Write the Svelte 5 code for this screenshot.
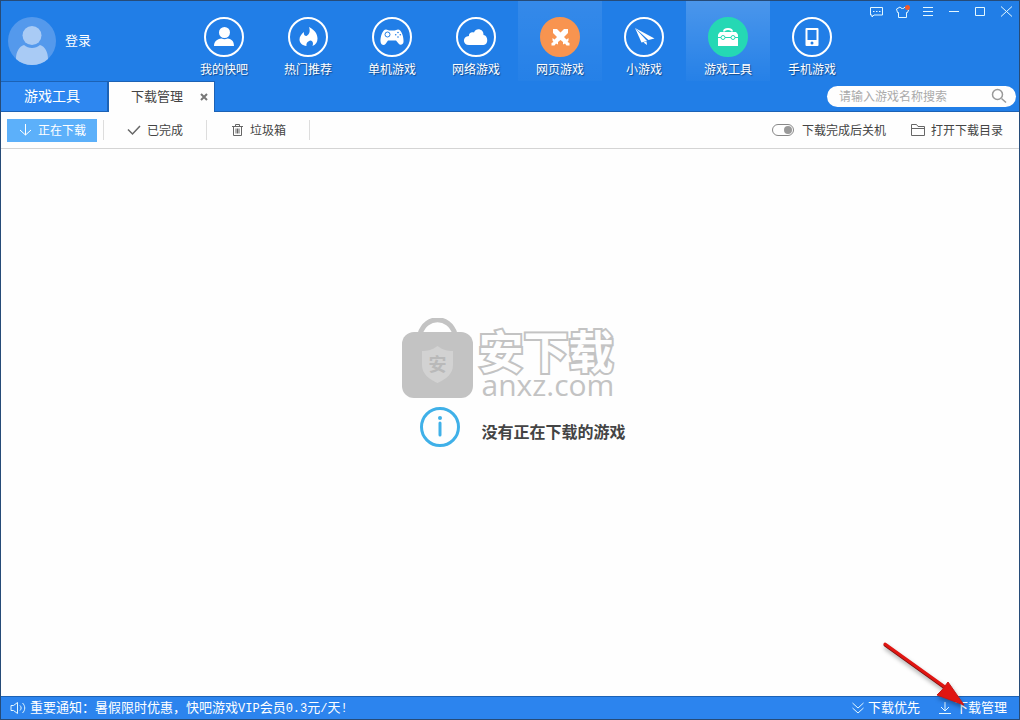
<script>
  const nav = [
    { id: 'mine', label: '我的快吧' },
    { id: 'hot', label: '热门推荐' },
    { id: 'single', label: '单机游戏' },
    { id: 'online', label: '网络游戏' },
    { id: 'web', label: '网页游戏', fill: 'orange' },
    { id: 'mini', label: '小游戏' },
    { id: 'tools', label: '游戏工具', fill: 'green' },
    { id: 'mobile', label: '手机游戏' },
  ];
  const controls = [
    { id: 'feedback', label: '反馈' },
    { id: 'skin', label: '换肤' },
    { id: 'menu', label: '菜单' },
    { id: 'min', label: '最小化' },
    { id: 'max', label: '最大化' },
    { id: 'close', label: '关闭' },
  ];
  const filters = [
    { id: 'active', label: '正在下载' },
    { id: 'done', label: '已完成' },
    { id: 'trash', label: '垃圾箱' },
  ];
  let filter = $state('active');
  let keyword = $state('');
  let shutdown = $state(true);
</script>

<div class="window">
  <header>
    <div class="top">
      <button class="user">
        <svg class="avatar" viewBox="0 0 48 48" aria-hidden="true">
          <circle cx="24" cy="24" r="24" fill="#5499ec" />
          <circle cx="24" cy="18.500" r="9.500" fill="#a9cbf5" />
          <path d="M8 42c0-7 3-12.500 8-14 4.500 4 11.500 4 16 0 5 1.500 8 7 8 14-4.500 4-10 6-16 6S12.500 46 8 42z" fill="#a9cbf5" />
        </svg>
        <span>登录</span>
      </button>

      <nav>
        {#each nav as item}
          <a href="#{item.id}" class="nav-item {item.fill ?? ''}">
            <svg class="nav-icon" viewBox="0 0 40 40" aria-hidden="true">
              <circle class="ring" cx="20" cy="20" r="19" />
              {#if item.id === 'mine'}
                <circle cx="20.500" cy="15.500" r="5.500" />
                <path d="M10 29c0-4.500 3-7 7.500-7.500 2 1 4 1 6 0C28 22 30 24.500 30 29z" />
              {:else if item.id === 'hot'}
                <path d="M21 10c5 2.500 8.500 6.500 8.500 11.500 0 3.500-1.500 6-5 7.500 1-2.500.5-5-2-5.500-2.500.5-4.500 2.500-4 5.500-4-.5-7-3-7-6.500 0-3 2-5.500 4.500-7.500-.5 2.500.5 4 2.500 4 3-1.500 4-5 2.500-9z" />
              {:else if item.id === 'single'}
                <path d="M14 12.500c1.500 0 2 1 3.500 1h5c1.500 0 2-1 3.500-1 3.500 0 6 8 5.500 12.500-.4 3-3.500 3.500-5 1.500L24 23.500h-8L13.500 27c-1.500 1.800-4.600 1-4.900-2C8 20.500 10.500 12.500 14 12.500z" />
                <circle class="cut" cx="15.500" cy="17.500" r="2.500" />
                <g class="dot"><circle cx="26" cy="15.500" r=".8" /><circle cx="26" cy="20" r=".8" /><circle cx="23.700" cy="17.700" r=".8" /><circle cx="28.300" cy="17.700" r=".8" /></g>
              {:else if item.id === 'online'}
                <path d="M13 28c-6.500 0-7-8.500 0-9-.5-3 3-4.500 5-3.500 2-5.500 10-3.500 9.500 2.500 5 .5 5 10 0 10z" />
              {:else if item.id === 'web'}
                <path d="M13 12h4l3.500 3.500L24 12h4v4l-4 4 2.500 2.500 2-1.500v2.500l-1 1.500 2 1v2.500h-3l-1.500-2-2 1v-2.500L20.500 23l-2.500 2v2.500l-2-1-1.500 2h-3V26l2-1-1-1.500V21l2 1.500L17 20l-4-4z" />
              {:else if item.id === 'mini'}
                <path d="M11 11l19.500 10.500-6 1.500z" />
                <path d="M11 11l12 13-5.500 1.500z" />
                <path d="M19.500 25.500l3-1 .5 3.500z" />
              {:else if item.id === 'tools'}
                <path class="line" d="M16 14.500c0-3.500 8-3.500 8 0" />
                <path d="M12 15h16l2 2.500V29H10V17.500z" />
                <path class="cut" d="M10 20.500h3m4 0h6m4 0h3" />
                <circle class="cut" cx="15" cy="20.500" r="2" /><circle class="cut" cx="25" cy="20.500" r="2" />
              {:else}
                <rect x="13.500" y="11" width="13" height="18" rx="1" />
                <rect class="dot" x="15.500" y="13" width="9" height="10" />
                <circle class="dot" cx="20" cy="26" r="1.500" />
              {/if}
            </svg>
            <span>{item.label}</span>
          </a>
        {/each}
      </nav>

      <div class="controls">
        {#each controls as c}
          <button aria-label={c.label}>
            <svg viewBox="0 0 16 16" aria-hidden="true">
              {#if c.id === 'feedback'}
                <path d="M2.500 3.500h12v7.500H6l-2 2v-2H2.500z" />
                <path d="M5 7.500h1.500M8 7.500h1.500M11 7.500h1.500" />
              {:else if c.id === 'skin'}
                <path d="M6 3L2.500 5l1 3.500h1v5h8v-5h1L14.500 6 11 3c-1 2-4 2-5 0z" />
                <circle class="badge" cx="13.500" cy="3.500" r="2.500" />
              {:else if c.id === 'menu'}
                <path d="M3 3.500h10M3 7.500h10M3 11.500h10" />
              {:else if c.id === 'min'}
                <path d="M3 7.500h10" />
              {:else if c.id === 'max'}
                <path d="M3.500 3.500h9v8h-9z" />
              {:else}
                <path d="M3 2.500l11 10M14 2.500l-11 10" />
              {/if}
            </svg>
          </button>
        {/each}
      </div>
    </div>

    <div class="tabs">
      <button class="tab">游戏工具</button>
      <div class="tab current">
        <button class="tab-name">下载管理</button>
        <button class="tab-close" aria-label="关闭标签">
          <svg viewBox="0 0 8 8" aria-hidden="true"><path d="M1 1l6 6M7 1L1 7" /></svg>
        </button>
      </div>
      <form class="search">
        <input type="text" aria-label="搜索" placeholder="请输入游戏名称搜索" bind:value={keyword} />
        <button type="button" aria-label="搜索">
          <svg viewBox="0 0 16 16" aria-hidden="true"><circle cx="6.500" cy="6.500" r="5" /><path d="M10.500 10.500l4.500 4" /></svg>
        </button>
      </form>
    </div>
  </header>

  <div class="toolbar">
    {#each filters as f}
      <button class="filter" class:on={filter === f.id} onclick={() => (filter = f.id)}>
        <svg viewBox="0 0 14 14" aria-hidden="true">
          {#if f.id === 'active'}
            <path d="M7.500 1v11M2 7l5.500 5L13 7" />
          {:else if f.id === 'done'}
            <path class="bold" d="M1 6.500l4.500 4.500L13 3" />
          {:else}
            <path d="M2 3.500h11M5.500 3V1.500h4V3M3.500 4v8.500h8V4M6 5.500v5M7.500 5.500v5M9 5.500v5" />
          {/if}
        </svg>
        <span>{f.label}</span>
      </button>
      <span class="sep"></span>
    {/each}
    <div class="actions">
      <label class="shutdown">
        <input type="checkbox" bind:checked={shutdown} />
        <span>下载完成后关机</span>
      </label>
      <button class="open-dir">
        <svg viewBox="0 0 14 14" aria-hidden="true"><path d="M.5 12.500v-11h5l1.500 2h6.500v9zM.5 5.500h13" /></svg>
        <span>打开下载目录</span>
      </button>
    </div>
  </div>

  <main>
    <div class="empty">
      <div class="brand">
        <svg viewBox="0 0 71 80" aria-hidden="true">
          <path d="M18 16C24-3 47-3 53 16" fill="none" stroke="#c3c3c3" stroke-width="5" />
          <rect y="14" width="71" height="66" rx="12" fill="#c3c3c3" />
          <path d="M35.500 28c5 4 10 5 15.500 5v14c0 9-7 14-15.500 18C27 61 20 56 20 47V33c5.500 0 10.500-1 15.500-5z" fill="#d2d2d2" />
          <text x="35.500" y="53" text-anchor="middle">安</text>
        </svg>
        <div class="brand-text">
          <span class="brand-name">安下载</span>
          <span class="brand-url">anxz.com</span>
        </div>
      </div>
      <div class="message">
        <svg viewBox="0 0 40 40" aria-hidden="true">
          <circle cx="20" cy="20" r="18.500" />
          <path d="M20 16v12" />
          <circle class="point" cx="20" cy="11" r="2" />
        </svg>
        <p>没有正在下载的游戏</p>
      </div>
    </div>
  </main>

  <footer>
    <svg viewBox="0 0 16 14" aria-hidden="true">
      <path d="M1 4.500h2.500l4-3v11l-4-3H1zM10 4.500c1.500 1.500 1.500 3.500 0 5M12.500 2c3 3 3 7 0 10" />
    </svg>
    <span class="notice">重要通知：暑假限时优惠，快吧游戏<b>VIP</b>会员<b>0.3</b>元<b>/</b>天<b>!</b></span>
    <button class="priority">
      <svg viewBox="0 0 14 14" aria-hidden="true"><path d="M1.500 2l5.500 5 5.500-5M1.500 7l5.500 5 5.500-5" /></svg>
      <span>下载优先</span>
    </button>
    <button>
      <svg viewBox="0 0 14 14" aria-hidden="true"><path d="M7 1v9M3 6l4 4 4-4M1 12.500h12" /></svg>
      <span>下载管理</span>
    </button>
  </footer>

  <svg class="pointer" viewBox="0 0 90 72" aria-hidden="true">
    <path d="M6 5L66 48" stroke="#7d1210" stroke-width="3" stroke-linecap="round" />
    <path d="M6 4L66 47" stroke="#e01512" stroke-width="3" stroke-linecap="round" />
    <path d="M69 42l16 23-27-10 5-5z" fill="#e01512" stroke="#c81815" />
  </svg>
</div>

<style>
  :global(body) { margin: 0; }
  .window {
    position: relative; box-sizing: border-box; min-height: 100vh;
    display: flex; flex-direction: column;
    border: 1px solid #264b78; background: #fefefe; color: #444;
    font-family: 'Liberation Sans', 'Noto Sans CJK SC', sans-serif; font-size: 12px; line-height: 16px;
  }
  button {
    display: flex; align-items: center; padding: 0; border: 0; background: none;
    color: inherit; font: inherit; white-space: nowrap; cursor: pointer;
  }
  svg { display: block; flex: none; }

  header { background: #217ee7; color: #fff; }
  .top { display: flex; height: 80px; }
  .user { width: 181px; gap: 9px; padding-left: 7px; font-size: 13px; }
  .avatar { width: 48px; height: 48px; }
  nav { display: flex; }
  .nav-item {
    width: 84px; box-sizing: border-box; padding-top: 16px;
    display: flex; flex-direction: column; align-items: center; gap: 5px;
    color: #fff; text-decoration: none; text-shadow: 1px 1px 1px #134a8c;
  }
  .nav-item.orange { background: linear-gradient(rgba(255, 255, 255, .09), rgba(255, 255, 255, .02)); }
  .nav-item.green { background: linear-gradient(rgba(255, 255, 255, .19), rgba(255, 255, 255, .02)); }
  .nav-icon { --back: #217ee7; width: 40px; height: 40px; fill: #fff; }
  .ring { fill: none; stroke: #fff; stroke-width: 2; }
  .orange .ring { fill: #f89450; stroke: #f89450; }
  .green .nav-icon { --back: #25d8b4; }
  .green .ring { fill: #25d8b4; stroke: #25d8b4; }
  .cut { fill: none; stroke: var(--back); stroke-width: 1; }
  circle.cut { fill: #fff; }
  .dot { fill: var(--back); }
  .line { fill: none; stroke: #fff; stroke-width: 2; }

  .controls { display: flex; align-self: flex-start; margin-left: auto; }
  .controls button { width: 26px; height: 22px; justify-content: center; }
  .controls svg { width: 16px; height: 16px; fill: none; stroke: #e4f8ff; }
  .controls .badge { fill: #f15a2b; stroke: none; }

  .tabs { display: flex; align-items: stretch; height: 30px; border-bottom: 1px solid #1c62b5; }
  .tab {
    width: 107px; box-sizing: border-box; justify-content: center; padding: 0 4px 2px 0;
    border: 1px solid #1c62b5; border-width: 1px 1px 0 0; background: #2e87f0; font-size: 14px;
  }
  .tab.current {
    display: flex; align-items: center; justify-content: flex-start; gap: 17px;
    margin-bottom: -1px; padding: 0 0 0 22px;
    border-left-width: 1px; background: #fefefe; color: #444; font-size: 13px;
  }
  .tab-close { width: 9px; height: 16px; }
  .tab-close svg { width: 8px; height: 8px; stroke: #777; stroke-width: 2; }
  .search {
    display: flex; align-items: center; align-self: center; box-sizing: border-box;
    width: 189px; height: 21px; margin: 0 3px 0 auto; padding: 0 9px 0 12px;
    border-radius: 11px; background: #fefefe;
  }
  .search input {
    flex: 1; min-width: 0; padding: 2px 0 0; border: 0; outline: 0; background: none;
    font: inherit; color: #444;
  }
  .search input::placeholder { color: #aaa; opacity: 1; }
  .search svg { width: 16px; height: 16px; fill: none; stroke: #999; stroke-width: 1.5; }

  .toolbar {
    display: flex; align-items: center; gap: 6px; height: 36px; padding: 0 16px 0 6px;
    border-bottom: 1px solid #d4d4d4;
  }
  .filter { width: 90px; height: 23px; justify-content: center; gap: 6px; }
  .filter.on { background: #5cb0fa; color: #fff; }
  .filter span, .actions span { padding-top: 2px; }
  .toolbar svg { width: 14px; height: 14px; fill: none; stroke: #666; }
  .toolbar .on svg { stroke: #fff; }
  .toolbar .bold { stroke-width: 1.5; }
  .sep { width: 1px; height: 20px; background: #ddd; }
  .actions { display: flex; gap: 25px; margin-left: auto; }
  .shutdown { display: flex; align-items: center; gap: 8px; }
  .shutdown input {
    appearance: none; box-sizing: border-box; display: flex; align-items: center;
    width: 22px; height: 12px; margin: 0; padding: 0 1px;
    border: 1px solid #888; border-radius: 6px; background: #fefefe;
  }
  .shutdown input::after { content: ''; width: 8px; height: 8px; border-radius: 50%; background: #999; }
  .shutdown input:checked::after { margin-left: auto; }
  .open-dir { gap: 6px; }

  main { flex: 1; display: flex; align-items: center; justify-content: center; padding: 0 0 80px 8px; }
  .empty { display: flex; flex-direction: column; gap: 9px; }
  .brand { display: flex; align-items: flex-end; gap: 5px; }
  .brand svg { width: 71px; height: 80px; }
  .brand text { font-size: 18px; font-weight: 700; font-family: 'Noto Sans CJK SC', sans-serif; fill: #b9b9b9; }
  .brand-text { display: flex; flex-direction: column; color: #c3c3c3; }
  .brand-name {
    font: 700 45px/44px 'Noto Sans CJK SC', sans-serif; color: #fefefe;
    -webkit-text-stroke: 4px #c3c3c3; paint-order: stroke fill;
  }
  .brand-url { padding-left: 3px; font: 500 30px/26px 'Open Sans', sans-serif; }
  .message { display: flex; align-items: center; gap: 21px; padding-left: 18px; }
  .message svg { width: 40px; height: 40px; fill: none; stroke: #3fb0e8; stroke-width: 3; stroke-linecap: round; }
  .message .point { fill: #3fb0e8; stroke: none; }
  .message p { margin: 0; padding-top: 12px; font-size: 16px; font-weight: 700; line-height: 20px; }

  footer {
    display: flex; align-items: center; height: 22px; padding: 0 12px 0 9px;
    border-top: 1px solid #1c62b5; background: #2c84ee; color: #fff; font-size: 13px;
  }
  footer svg { width: 14px; height: 14px; fill: none; stroke: #e4f8ff; }
  footer > svg { width: 16px; margin-right: 4px; }
  footer button { gap: 3px; }
  .notice b { font-family: 'Liberation Mono', monospace; font-size: 12px; font-weight: 400; }
  .priority { margin: 0 18px 0 auto; }
  .pointer { position: absolute; right: 50px; bottom: 7px; width: 90px; height: 72px; fill: none; filter: drop-shadow(1px 3px 2px #0005); pointer-events: none; }
</style>
